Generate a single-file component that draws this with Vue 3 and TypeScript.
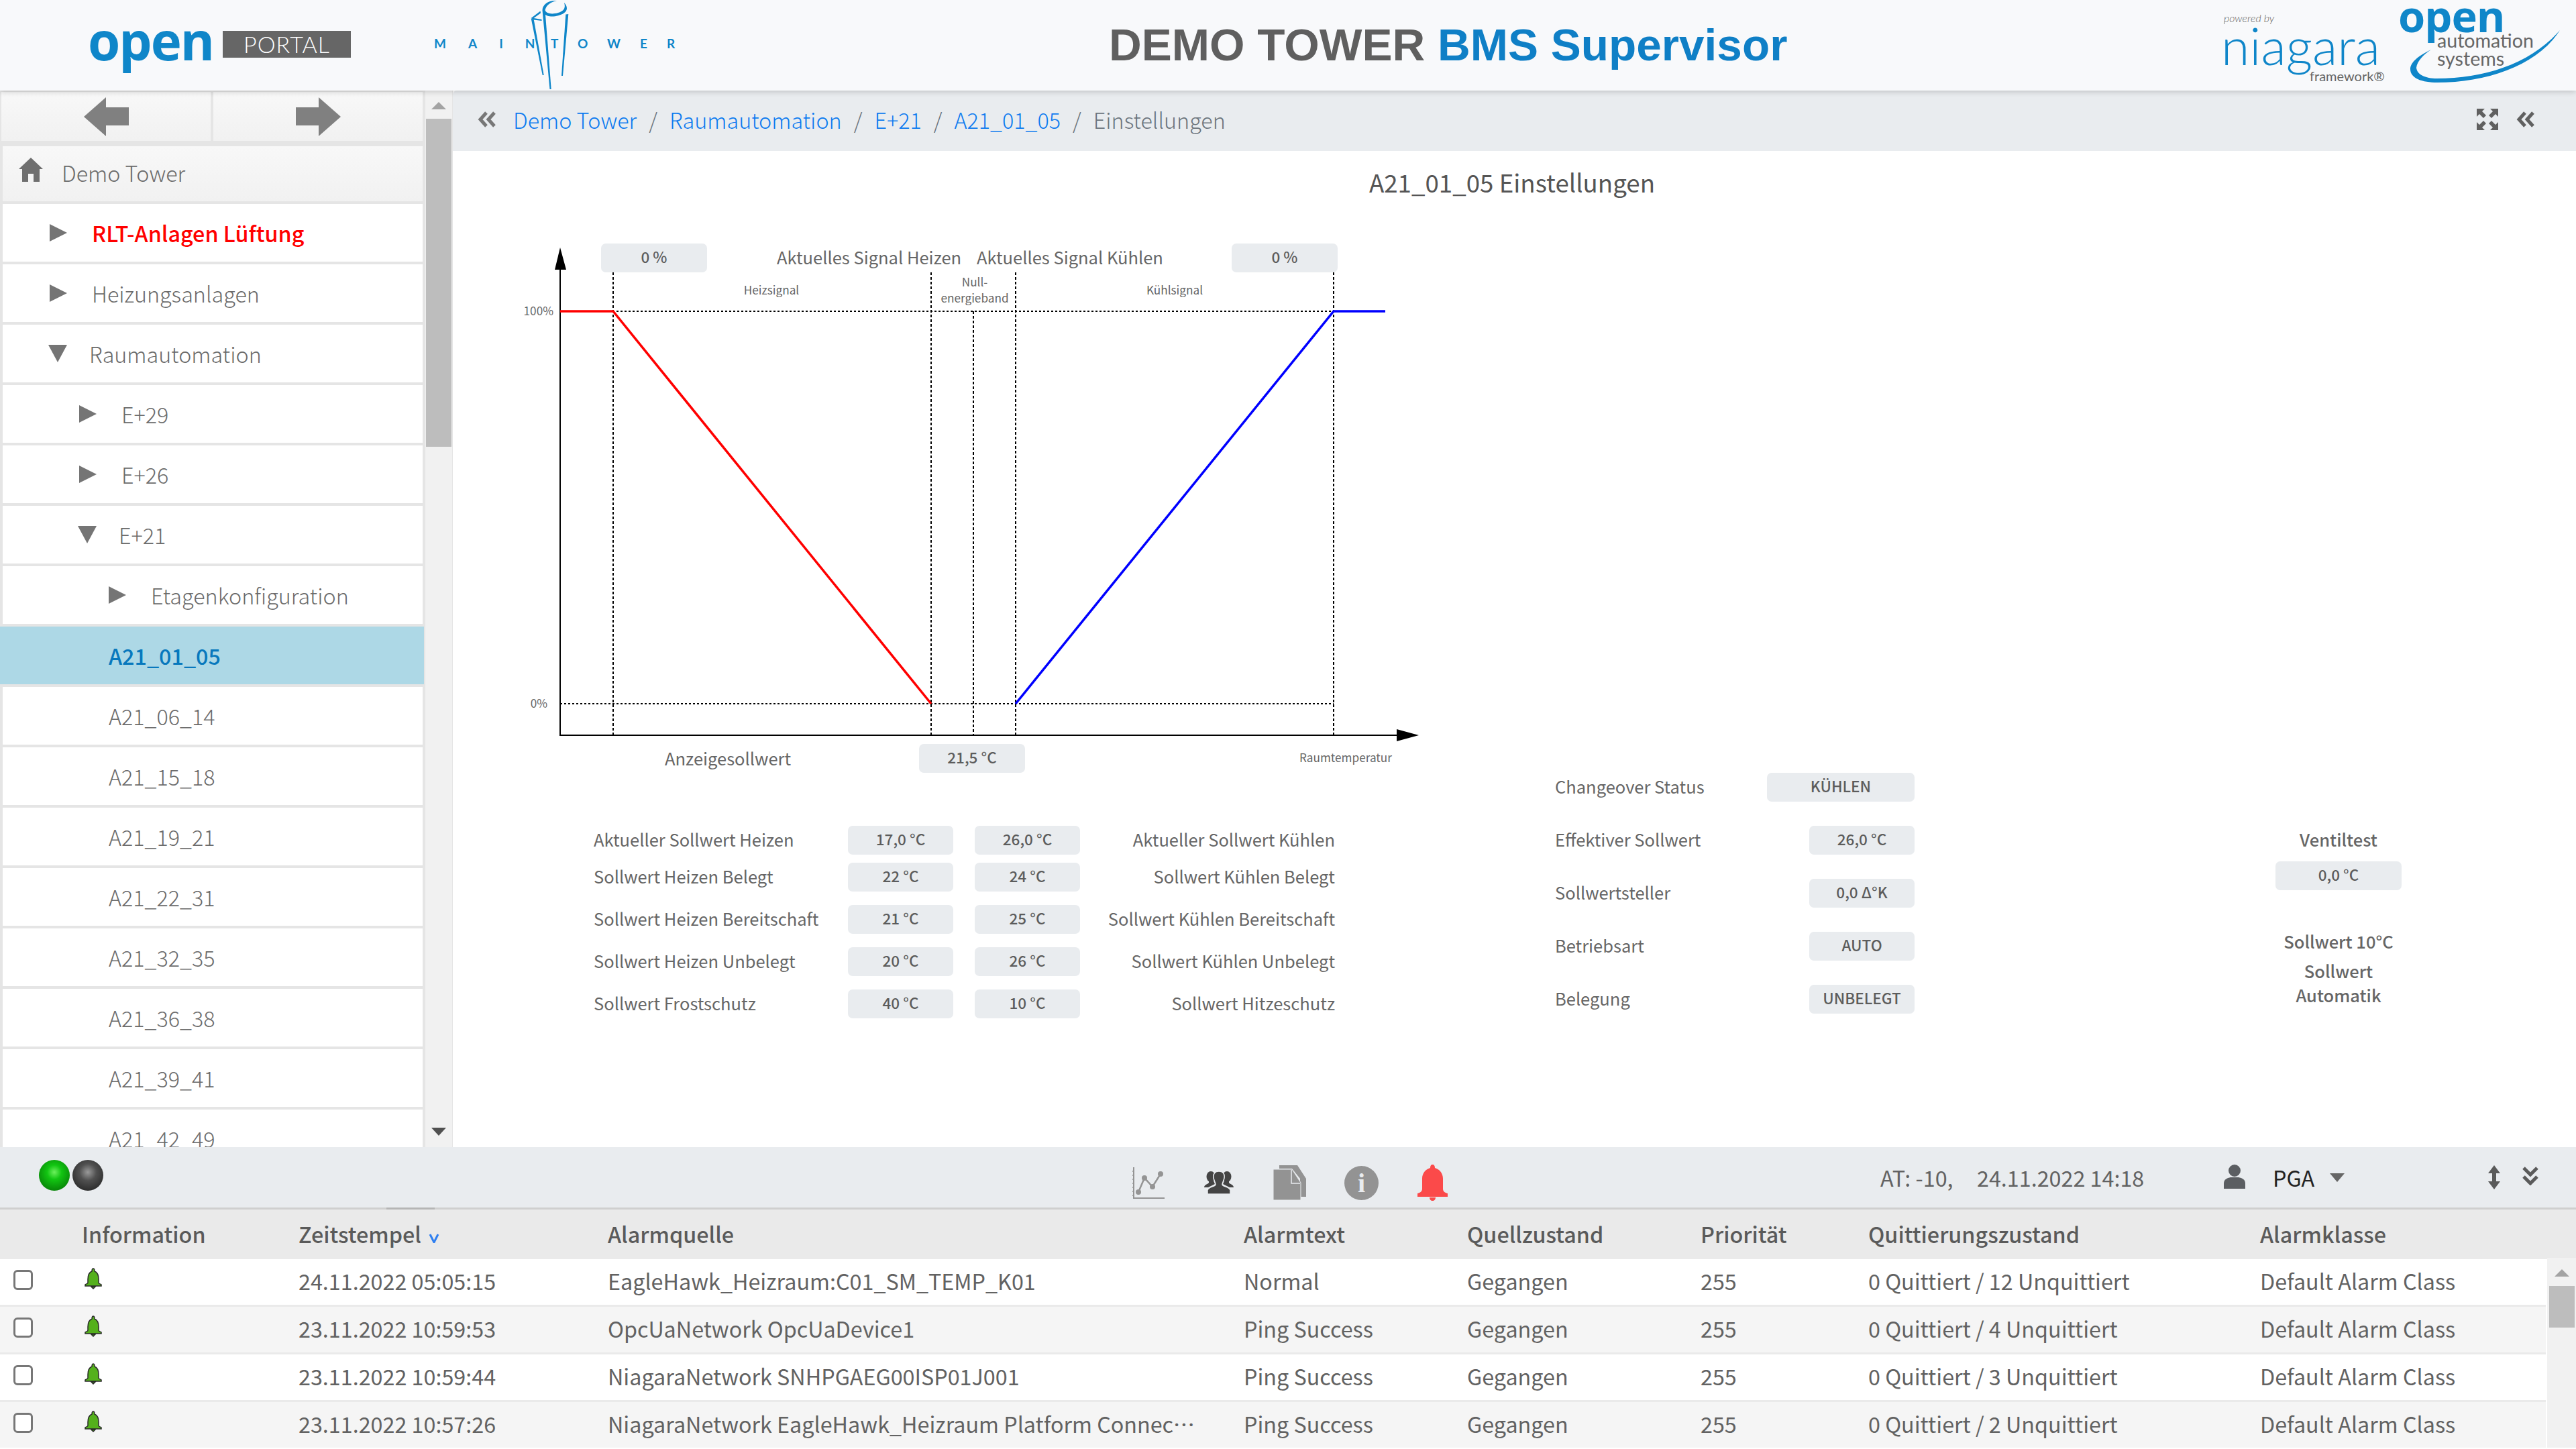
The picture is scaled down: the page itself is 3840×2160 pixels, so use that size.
<script setup lang="ts">
interface NavItem {
  label: string
  level: number
  arrow?: 'right' | 'down'
  alert?: boolean
  active?: boolean
}

interface AlarmRow {
  time: string
  source: string
  text: string
  ack: string
}

const navItems: NavItem[] = [
  { label: 'RLT-Anlagen Lüftung', level: 0, arrow: 'right', alert: true },
  { label: 'Heizungsanlagen', level: 0, arrow: 'right' },
  { label: 'Raumautomation', level: 0, arrow: 'down' },
  { label: 'E+29', level: 1, arrow: 'right' },
  { label: 'E+26', level: 1, arrow: 'right' },
  { label: 'E+21', level: 1, arrow: 'down' },
  { label: 'Etagenkonfiguration', level: 2, arrow: 'right' },
  { label: 'A21_01_05', level: 3, active: true },
  { label: 'A21_06_14', level: 3 },
  { label: 'A21_15_18', level: 3 },
  { label: 'A21_19_21', level: 3 },
  { label: 'A21_22_31', level: 3 },
  { label: 'A21_32_35', level: 3 },
  { label: 'A21_36_38', level: 3 },
  { label: 'A21_39_41', level: 3 },
  { label: 'A21_42_49', level: 3 },
]

const crumbs = ['Demo Tower', 'Raumautomation', 'E+21', 'A21_01_05']

const setpoints = [
  { left: 'Aktueller Sollwert Heizen', a: '17,0 °C', b: '26,0 °C', right: 'Aktueller Sollwert Kühlen' },
  { left: 'Sollwert Heizen Belegt', a: '22 °C', b: '24 °C', right: 'Sollwert Kühlen Belegt' },
  { left: 'Sollwert Heizen Bereitschaft', a: '21 °C', b: '25 °C', right: 'Sollwert Kühlen Bereitschaft' },
  { left: 'Sollwert Heizen Unbelegt', a: '20 °C', b: '26 °C', right: 'Sollwert Kühlen Unbelegt' },
  { left: 'Sollwert Frostschutz', a: '40 °C', b: '10 °C', right: 'Sollwert Hitzeschutz' },
]

const states = [
  { label: 'Effektiver Sollwert', value: '26,0 °C' },
  { label: 'Sollwertsteller', value: '0,0 Δ°K' },
  { label: 'Betriebsart', value: 'AUTO' },
  { label: 'Belegung', value: 'UNBELEGT' },
]

const columns = ['Information', 'Zeitstempel', 'Alarmquelle', 'Alarmtext', 'Quellzustand', 'Priorität', 'Quittierungszustand', 'Alarmklasse']

const alarms: AlarmRow[] = [
  { time: '24.11.2022 05:05:15', source: 'EagleHawk_Heizraum:C01_SM_TEMP_K01', text: 'Normal', ack: '0 Quittiert / 12 Unquittiert' },
  { time: '23.11.2022 10:59:53', source: 'OpcUaNetwork OpcUaDevice1', text: 'Ping Success', ack: '0 Quittiert / 4 Unquittiert' },
  { time: '23.11.2022 10:59:44', source: 'NiagaraNetwork SNHPGAEG00ISP01J001', text: 'Ping Success', ack: '0 Quittiert / 3 Unquittiert' },
  { time: '23.11.2022 10:57:26', source: 'NiagaraNetwork EagleHawk_Heizraum Platform Connection', text: 'Ping Success', ack: '0 Quittiert / 2 Unquittiert' },
]
</script>

<template>
  <div class="app">
    <header class="top">
      <div class="logo-open">
        <span class="open-word">open</span>
        <span class="portal">PORTAL</span>
      </div>
      <div class="logo-tower">
        <span class="tower-word first">MAIN</span>
        <svg class="tower-mark" viewBox="0 0 70 135" width="70" height="135">
          <g fill="#0f86c9">
            <path d="M18.5 15 L22.5 15 L31.7 133 L29.5 133 Z" />
            <path d="M18.5 15 C19 6 28 0 40 1 C32 3 25 6 22.5 15 Z" />
            <path d="M22.5 15 C24 20 32 22 42 19 C49 17 54 13 51 4 C56 9 57 16 50 20 C42 25 26 27 21 20 Z" />
            <path d="M53.3 21.5 L57.3 21 L49 113 L47 113 Z" />
            <path d="M1.7 27.5 L5.7 29 L20.7 112 L18.7 112 Z" />
            <path d="M1.7 27 L15.5 16.5 L16 19.5 L5.7 27 L17.5 29 L17.5 31 L5.7 29.5 Z" />
          </g>
        </svg>
        <span class="tower-word second">TOWER</span>
      </div>
      <h1 class="main-title">DEMO TOWER <span>BMS Supervisor</span></h1>
      <div class="logo-niagara">
        <span class="powered">powered by</span>
        <span class="niagara-word">niagara</span>
        <span class="framework">framework®</span>
      </div>
      <div class="logo-oas">
        <svg class="swoosh" viewBox="0 0 226 80" width="226" height="80">
          <path d="M223 0 C180 50 110 72 40 72 C22 72 10 66 9 56 C10 46 20 36 31 29 C12 38 0 48 0 58 C0 72 18 78 40 78 C115 78 190 52 223 0 Z" fill="#0f86c9" />
        </svg>
        <span class="oas-open">open</span>
        <span class="oas-line">automation</span>
        <span class="oas-line">systems</span>
      </div>
    </header>

    <div class="mid">
      <aside class="side">
        <div class="side-main">
          <div class="nav-buttons">
            <button class="nav-btn" type="button">
              <svg viewBox="0 0 67 58" width="67" height="58"><path d="M0 29 L33 0 V15 H67 V42 H33 V58 Z" fill="#808080" /></svg>
            </button>
            <button class="nav-btn" type="button">
              <svg viewBox="0 0 67 58" width="67" height="58"><path d="M67 29 L34 0 V15 H0 V42 H34 V58 Z" fill="#808080" /></svg>
            </button>
          </div>
          <div class="home-row">
            <svg class="home-icon" viewBox="0 0 36 36" width="36" height="36">
              <path d="M18 0 L36 17 L31 17 L31 36 L22 36 L22 24 L14 24 L14 36 L5 36 L5 17 L0 17 Z" fill="#6f6f6f" />
            </svg>
            <span>Demo Tower</span>
          </div>
          <div
            v-for="item in navItems"
            :key="item.label"
            class="nav-item"
            :class="['lvl-' + item.level, { alert: item.alert, active: item.active }]"
          >
            <span v-if="item.arrow" class="tri" :class="item.arrow"></span>
            <span class="nav-label">{{ item.label }}</span>
          </div>
        </div>
        <div class="scrollbar">
          <span class="sb-up"></span>
          <span class="sb-thumb"></span>
          <span class="sb-down"></span>
        </div>
      </aside>

      <main class="page">
        <nav class="crumb-bar">
          <svg class="chev" viewBox="0 0 30 24" width="30" height="24">
            <path d="M14 2 L5 12 L14 22 M26 2 L17 12 L26 22" fill="none" stroke="#777" stroke-width="5" />
          </svg>
          <template v-for="c in crumbs" :key="c">
            <a class="crumb">{{ c }}</a>
            <span class="sep">/</span>
          </template>
          <span class="crumb-last">Einstellungen</span>
          <svg class="expand" viewBox="0 0 32 32" width="32" height="32">
            <path d="M0 0 H12 L8 4 L14 10 L10 14 L4 8 L0 12 Z M32 0 V12 L28 8 L22 14 L18 10 L24 4 L20 0 Z M0 32 V20 L4 24 L10 18 L14 22 L8 28 L12 32 Z M32 32 H20 L24 28 L18 22 L22 18 L28 24 L32 20 Z" fill="#606060" />
          </svg>
          <svg class="chev-right" viewBox="0 0 30 24" width="30" height="24">
            <path d="M14 2 L5 12 L14 22 M26 2 L17 12 L26 22" fill="none" stroke="#606060" stroke-width="5" />
          </svg>
        </nav>

        <h2 class="page-title">A21_01_05 Einstellungen</h2>

        <div class="content">
          <section class="left-col">
            <div class="chart">
              <svg viewBox="0 0 1400 820" width="1400" height="820">
                <g stroke="#000" stroke-width="2" fill="none">
                  <g stroke-dasharray="4 3">
                    <path d="M154 66 V756" />
                    <path d="M628 66 V756" />
                    <path d="M691 124 V756" />
                    <path d="M754 66 V756" />
                    <path d="M1228 66 V756" />
                  </g>
                  <g stroke-dasharray="3 3">
                    <path d="M75 124 H1228" />
                    <path d="M75 709 H1228" />
                  </g>
                  <path d="M75 40 V756 H1330" />
                </g>
                <path d="M75 29 L67 62 H84 Z" fill="#000" />
                <path d="M1355 756 L1322 747 V765 Z" fill="#000" />
                <path d="M75 124 H154 L628 709" fill="none" stroke="#ff0000" stroke-width="3.5" />
                <path d="M754 709 L1228 124 H1305" fill="none" stroke="#0000ff" stroke-width="3.5" />
                <g class="small">
                  <text x="390" y="99" text-anchor="middle">Heizsignal</text>
                  <text x="693" y="87" text-anchor="middle">Null-</text>
                  <text x="693" y="111" text-anchor="middle">energieband</text>
                  <text x="991" y="99" text-anchor="middle">Kühlsignal</text>
                  <text x="65" y="130" text-anchor="end">100%</text>
                  <text x="56" y="715" text-anchor="end">0%</text>
                  <text x="1177" y="796">Raumtemperatur</text>
                </g>
                <g class="medium">
                  <text x="398" y="54">Aktuelles Signal Heizen</text>
                  <text x="696" y="54">Aktuelles Signal Kühlen</text>
                  <text x="231" y="801">Anzeigesollwert</text>
                </g>
              </svg>
              <div class="pill chart-pill p-a">0 %</div>
              <div class="pill chart-pill p-b">0 %</div>
              <div class="pill chart-pill p-c">21,5 °C</div>
            </div>

            <div class="setpoints">
              <div v-for="row in setpoints" :key="row.left" class="sp-row">
                <span class="sp-label">{{ row.left }}</span>
                <span class="pill sp-pill">{{ row.a }}</span>
                <span class="pill sp-pill">{{ row.b }}</span>
                <span class="sp-label right">{{ row.right }}</span>
              </div>
            </div>
          </section>

          <section class="state-col">
            <div class="state-row">
              <span class="sp-label">Changeover Status</span>
              <span class="pill wide">KÜHLEN</span>
            </div>
            <div v-for="s in states" :key="s.label" class="state-row">
              <span class="sp-label">{{ s.label }}</span>
              <span class="pill narrow">{{ s.value }}</span>
            </div>
          </section>

          <section class="valve-col">
            <div class="valve-head">Ventiltest</div>
            <div class="pill valve-pill">0,0 °C</div>
            <div class="valve-head strong">Sollwert 10°C</div>
            <div class="valve-head auto">Sollwert<br />Automatik</div>
          </section>
        </div>
      </main>
    </div>

    <div class="status-bar">
      <div class="leds">
        <span class="led green"></span>
        <span class="led dark"></span>
      </div>
      <div class="tools">
        <svg class="t-chart" viewBox="0 0 51 51" width="51" height="51">
          <path d="M5 2 V48 H51" fill="none" stroke="#949494" stroke-width="2" />
          <path d="M3 8 H6 M3 14 H6 M3 20 H6 M3 26 H6 M3 32 H6 M3 38 H6 M3 44 H6 M10 49 V47 M16 49 V47 M22 49 V47 M28 49 V47 M34 49 V47 M40 49 V47 M46 49 V47" stroke="#949494" stroke-width="1.5" />
          <path d="M12 39 L21 18 L33 31 L45 12" fill="none" stroke="#949494" stroke-width="2.5" />
          <g fill="#949494"><circle cx="12" cy="39" r="4" /><circle cx="21" cy="18" r="4" /><circle cx="33" cy="31" r="4" /><circle cx="45" cy="12" r="4" /></g>
        </svg>
        <svg class="t-group" viewBox="0 0 44 34" width="44" height="34">
          <g fill="#444">
            <ellipse cx="10" cy="8" rx="6.5" ry="8" />
            <path d="M7 14 H14 L16 19 L6 24 H0 C0 20 6 19 7 17 Z" />
            <ellipse cx="34" cy="8" rx="6.5" ry="8" />
            <path d="M37 14 H30 L28 19 L38 24 H44 C44 20 38 19 37 17 Z" />
            <path d="M22 0 C28 0 31 4 30 10 C29 15 27 17 27 20 C28 23 37 23 39 28 V34 H5 V28 C7 23 16 23 17 20 C17 17 15 15 14 10 C13 4 16 0 22 0 Z" stroke="#e9ecef" stroke-width="1.5" />
          </g>
        </svg>
        <svg class="t-docs" viewBox="0 0 49 52" width="49" height="52">
          <path d="M9 0 H36 L49 20 V47 H40 V20 L28 5 H9 Z" fill="#939393" />
          <path d="M0 6 H28 L41 26 V52 H0 Z" fill="#939393" stroke="#e9ecef" stroke-width="1" />
          <path d="M27 7 V27 H40" fill="none" stroke="#e9ecef" stroke-width="1.5" />
        </svg>
        <span class="t-info">i</span>
        <svg class="t-bell" viewBox="0 0 45 54" width="45" height="54">
          <path d="M22.5 0 C25 0 26 2 26 5 C33 7 38 13 38 21 V36 C38 40 41 42 45 43 V48 H0 V43 C4 42 7 40 7 36 V21 C7 13 12 7 19 5 C19 2 20 0 22.5 0 Z M18 49 H27 C27 52 25 54 22.5 54 C20 54 18 52 18 49 Z" fill="#fb4a4a" />
        </svg>
      </div>
      <div class="at">AT: -10,</div>
      <div class="stamp">24.11.2022 14:18</div>
      <svg class="user" viewBox="0 0 32 36" width="32" height="36">
        <ellipse cx="16" cy="9" rx="9" ry="9" fill="#5b5e62" />
        <path d="M0 36 V28 C0 22 5 20 10 19 H22 C27 20 32 22 32 28 V36 Z" fill="#5b5e62" />
      </svg>
      <span class="who">PGA</span>
      <span class="caret"></span>
      <svg class="updown" viewBox="0 0 18 36" width="18" height="36">
        <path d="M9 0 L18 12 H12 V24 H18 L9 36 L0 24 H6 V12 H0 Z" fill="#5a5a5a" />
      </svg>
      <svg class="dbl-down" viewBox="0 0 24 28" width="24" height="28">
        <path d="M2 2 L12 12 L22 2 M2 15 L12 25 L22 15" fill="none" stroke="#5a5a5a" stroke-width="5" />
      </svg>
      <span class="grip"></span>
    </div>

    <section class="alarms">
      <div class="alarm-row head">
        <span></span>
        <span v-for="(col, i) in columns" :key="col" class="th">
          {{ col }}
          <svg v-if="i === 1" class="sort" viewBox="0 0 16 14" width="16" height="14">
            <path d="M2 1 L8 13 L14 1" fill="none" stroke="#2f7ff0" stroke-width="3" />
          </svg>
        </span>
      </div>
      <div class="alarm-body">
        <div class="rows">
          <div v-for="(a, i) in alarms" :key="a.time" class="alarm-row item" :class="{ odd: i % 2 === 1 }">
            <span class="check-cell"><input class="check" type="checkbox" /></span>
            <span class="bell-cell">
              <svg viewBox="0 0 28 32" width="28" height="32">
                <path d="M14 1 C16 1 16 3 16 5 C21 7 22 12 22 17 V22 C22 24 25 24 26 25 V27 H2 V25 C3 24 6 24 6 22 V17 C6 12 7 7 12 5 C12 3 12 1 14 1 Z M11 28 H17 L14 31 Z" fill="#54b01c" stroke="#2a2a2a" stroke-width="1.5" />
              </svg>
            </span>
            <span>{{ a.time }}</span>
            <span class="truncate">{{ a.source }}</span>
            <span>{{ a.text }}</span>
            <span>Gegangen</span>
            <span>255</span>
            <span>{{ a.ack }}</span>
            <span>Default Alarm Class</span>
          </div>
        </div>
        <div class="table-scroll">
          <span class="sb-up"></span>
          <span class="ts-thumb"></span>
        </div>
      </div>
    </section>
  </div>
</template>

<style>
html,
body {
  margin: 0;
  background: #fff;
}
</style>

<style scoped>
.app {
  width: 3840px;
  height: 2160px;
  overflow: hidden;
  display: flex;
  flex-direction: column;
  font-family: 'Noto Sans CJK SC', 'Noto Sans', sans-serif;
  color: #626262;
  font-size: 32.3px;
}

/* header */
.top {
  height: 135px;
  flex: none;
  position: relative;
  z-index: 2;
  display: flex;
  align-items: flex-start;
  background: #f8f9fb;
  box-shadow: 0 2px 8px rgba(0, 0, 0, 0.18);
}
.logo-open {
  display: flex;
  align-items: flex-start;
  margin: 46px 0 0 131px;
  width: 516px;
}
.open-word {
  font: 700 78px/28px 'Open Sans', sans-serif;
  color: #0f86c9;
  letter-spacing: -2px;
  width: 190px;
  flex: none;
}
.portal {
  margin-left: 11px;
  width: 191px;
  height: 40px;
  background: #666;
  color: #fff;
  font: 300 34px/40px Lato, sans-serif;
  letter-spacing: 1px;
  text-align: center;
}
.logo-tower {
  width: 363px;
  display: flex;
  align-items: flex-start;
}
.tower-word {
  font: 700 19px/20px Lato, sans-serif;
  color: #0f86c9;
  margin-top: 55px;
  white-space: nowrap;
}
.tower-word.first {
  flex: none;
  width: 143px;
  letter-spacing: 33px;
}
.tower-word.second {
  flex: none;
  margin-left: -39px;
  letter-spacing: 29px;
}
.tower-mark {
  flex: none;
}
.main-title {
  margin: 23px 0 0 643px;
  font: 700 67.5px/88px 'Liberation Sans', sans-serif;
  color: #5f5f5f;
  white-space: nowrap;
  width: 1662px;
  flex: none;
}
.main-title span {
  color: #0f7fc6;
}
.logo-niagara {
  width: 260px;
  flex: none;
  display: flex;
  flex-direction: column;
}
.powered {
  margin-top: 17px;
  font: italic 300 16px/20px Lato, sans-serif;
  color: #666;
}
.niagara-word {
  font: 300 77px/60px Lato, sans-serif;
  color: #0f86c9;
  margin-left: -4px;
}
.framework {
  margin: 6px 0 0 128px;
  font: 400 20px/20px Lato, sans-serif;
  color: #666;
  white-space: nowrap;
}
.logo-oas {
  position: relative;
  flex: none;
  display: flex;
  flex-direction: column;
  padding-left: 58px;
}
.swoosh {
  position: absolute;
  left: 18px;
  top: 45px;
}
.oas-open {
  margin-left: -58px;
  font: 700 65px/46px 'Open Sans', sans-serif;
  color: #0f86c9;
  height: 47px;
  letter-spacing: -1px;
}
.oas-line {
  font: 400 28.6px/27px Lato, sans-serif;
  color: #666;
  position: relative;
}

/* main band */
.mid {
  height: 1575px;
  flex: none;
  display: flex;
  overflow: hidden;
}
.side {
  width: 675px;
  flex: none;
  display: flex;
  background: #e5e5e5;
}
.side-main {
  width: 632px;
  flex: none;
}
.nav-buttons {
  display: flex;
  gap: 4px;
  padding: 2px 2px 6px;
  box-sizing: border-box;
  height: 81px;
}
.nav-btn {
  flex: 1;
  border: 0;
  padding: 0;
  display: flex;
  align-items: center;
  justify-content: center;
  background: linear-gradient(#f8f8f8, #f1f1f1);
}
.home-row {
  height: 82px;
  box-sizing: border-box;
  padding-bottom: 4px;
  margin: 2px 2px 4px 4px;
  display: flex;
  align-items: center;
  gap: 28px;
  padding-left: 24px;
  font-weight: 300;
  color: #6b6b6b;
  background: linear-gradient(#f8f8f8, #f1f1f1);
}
.home-icon {
  margin-top: -8px;
}
.nav-item {
  height: 86px;
  margin-bottom: 4px;
  margin-left: 4px;
  margin-right: 2px;
  background: #fff;
  display: flex;
  align-items: center;
  font-weight: 300;
  color: #6b6b6b;
}
.nav-item.lvl-0 { padding-left: 70px; }
.nav-item.lvl-1 { padding-left: 114px; }
.nav-item.lvl-2 { padding-left: 158px; }
.nav-item.lvl-3 { padding-left: 158px; }
.nav-item.alert {
  color: #ff0000;
  font-weight: 500;
}
.nav-item.active {
  background: #add8e6;
  color: #0878bd;
  font-weight: 500;
  margin-left: 0;
  margin-right: 0;
  padding-left: 162px;
}
.tri {
  display: inline-block;
  width: 0;
  height: 0;
  flex: none;
  margin-right: 37px;
}
.tri.right {
  border-left: 26px solid #757575;
  border-top: 13px solid transparent;
  border-bottom: 13px solid transparent;
}
.tri.down {
  border-top: 26px solid #757575;
  border-left: 14px solid transparent;
  border-right: 14px solid transparent;
  margin-right: 33px;
  margin-left: -2px;
}
.scrollbar {
  width: 40px;
  margin-left: 2px;
  flex: none;
  background: #f1f1f1;
  position: relative;
}
.sb-up,
.sb-down {
  position: absolute;
  left: 50%;
  width: 0;
  height: 0;
  margin-left: -11px;
  border-left: 11px solid transparent;
  border-right: 11px solid transparent;
}
.sb-up {
  top: 17px;
  border-bottom: 11px solid #a3a3a3;
}
.sb-down {
  bottom: 17px;
  border-top: 12px solid #505050;
}
.sb-thumb {
  position: absolute;
  left: 1px;
  right: 1px;
  top: 42px;
  height: 489px;
  background: #bdbdbd;
}

/* page */
.page {
  flex: 1;
  min-width: 0;
  background: #fff;
}
.crumb-bar {
  height: 90px;
  box-sizing: border-box;
  padding-bottom: 4px;
  display: flex;
  align-items: center;
  background: #e9ecef;
  font-weight: 300;
  border-radius: 6px 0 0 0;
}
.chev {
  margin: 0 24px 0 36px;
  flex: none;
}
.crumb {
  color: #0d7bf0;
}
.sep {
  color: #6c757d;
  margin: 0 18px;
}
.crumb-last {
  color: #6c757d;
}
.expand {
  margin-left: auto;
  margin-right: 26px;
}
.chev-right {
  margin-right: 60px;
}
.page-title {
  margin: 0;
  height: 115px;
  box-sizing: border-box;
  padding-top: 16px;
  font-size: 36.7px;
  line-height: 60px;
  font-weight: 400;
  color: #555;
  text-align: center;
  padding-right: 7px;
}
.content {
  display: flex;
  padding-left: 85px;
}
.left-col {
  width: 1558px;
  flex: none;
}
.chart {
  position: relative;
  width: 1400px;
  height: 820px;
}
.chart svg {
  display: block;
}
.small text {
  font-size: 17.2px;
  fill: #666;
}
.medium text {
  font-size: 25.5px;
  fill: #666;
}
.pill {
  background: #e9ecef;
  border-radius: 7px;
  height: 43px;
  line-height: 38px;
  font-size: 22.5px;
  font-weight: 500;
  text-align: center;
  color: #5c5c5c;
  box-sizing: border-box;
}
.chart-pill {
  position: absolute;
  width: 158px;
}
.p-a { left: 136px; top: 23px; }
.p-b { left: 1076px; top: 23px; }
.p-c { left: 610px; top: 769px; }
.setpoints {
  margin-top: 71px;
  padding-left: 125px;
  width: 1105px;
  display: flex;
  flex-direction: column;
  gap: 20px;
}
.sp-row {
  display: grid;
  grid-template-columns: 347px 157px 157px 1fr;
  column-gap: 32px;
  height: 43px;
  align-items: center;
}
.sp-row:first-child {
  margin-bottom: -8px;
}
.sp-label {
  font-size: 25.5px;
  line-height: 39px;
  padding-bottom: 4px;
  color: #666;
  white-space: nowrap;
}
.sp-label.right {
  text-align: right;
  margin-left: -32px;
}
.state-col {
  width: 536px;
  flex: none;
  padding-top: 812px;
  display: flex;
  flex-direction: column;
  gap: 36px;
}
.state-row {
  display: flex;
  justify-content: space-between;
  align-items: center;
  height: 43px;
}
.pill.wide {
  width: 220px;
}
.pill.narrow {
  width: 157px;
}
.valve-col {
  margin-left: 538px;
  width: 188px;
  padding-top: 893px;
  flex: none;
  text-align: center;
}
.valve-head {
  font-size: 25.5px;
  line-height: 36px;
  color: #666;
  font-weight: 500;
  white-space: nowrap;
}
.valve-pill {
  margin-top: 15px;
}
.valve-head.strong {
  margin-top: 58px;
}
.valve-head.auto {
  margin-top: 8px;
}

/* status bar */
.status-bar {
  height: 93px;
  flex: none;
  box-sizing: border-box;
  border-bottom: 3px solid #cfcfcf;
  background: #e9ecef;
  display: flex;
  align-items: center;
  position: relative;
}
.leds {
  display: flex;
  gap: 4px;
  margin-left: 58px;
  width: 1627px;
  margin-top: -6px;
}
.led {
  width: 46px;
  height: 46px;
  border-radius: 50%;
}
.led.green {
  background: radial-gradient(circle at 50% 40%, #6cf05c 0, #12c512 30%, #067a06 85%);
}
.led.dark {
  background: radial-gradient(circle at 50% 40%, #9a9a9a 0, #505050 35%, #222 90%);
}
.tools {
  width: 1118px;
  display: flex;
  align-items: center;
  margin-top: 10px;
}
.t-chart { margin-top: 6px; }
.t-group { margin: 6px 0 0 59px; }
.t-docs { margin: 6px 0 0 59px; }
.t-info {
  width: 51px;
  height: 51px;
  margin: 6px 0 0 57px;
  border-radius: 50%;
  background: #939393;
  color: #e9ecef;
  font: 700 40px/51px 'Liberation Serif', serif;
  text-align: center;
}
.t-bell { margin: 6px 0 0 58px; }
.at {
  width: 144px;
  white-space: nowrap;
}
.stamp {
  width: 368px;
  white-space: nowrap;
}
.user {
  margin: -2px 0 0 0;
  flex: none;
}
.who {
  margin-left: 41px;
  color: #222;
}
.caret {
  margin-left: 23px;
  width: 0;
  height: 0;
  border-top: 13px solid #666;
  border-left: 11px solid transparent;
  border-right: 11px solid transparent;
}
.updown {
  margin: 0 0 0 214px;
  flex: none;
}
.dbl-down {
  margin: -4px 0 0 33px;
  flex: none;
}
.grip {
  position: absolute;
  left: 576px;
  bottom: -3px;
  width: 72px;
  height: 3px;
  background: #b5b5b5;
}

/* table */
.alarms {
  flex: 1;
  min-height: 0;
  overflow: hidden;
}
.alarm-row {
  display: grid;
  grid-template-columns: 122px 323px 461px 948px 333px 348px 250px 584px 1fr;
  align-items: center;
  white-space: nowrap;
}
.alarm-row.head {
  height: 74px;
  box-sizing: border-box;
  padding-bottom: 2px;
  background: #eaeaea;
  font-weight: 500;
  color: #5a5a5a;
}
.sort {
  margin-left: 4px;
}
.alarm-body {
  display: flex;
}
.rows {
  width: 3795px;
  flex: none;
  background: #eaeaea;
  display: flex;
  flex-direction: column;
  gap: 3px;
}
.alarm-row.item {
  height: 68px;
  box-sizing: border-box;
  padding-bottom: 4px;
  background: #fff;
}
.alarm-row.item.odd {
  background: #f5f5f5;
}
.check-cell {
  padding-left: 20px;
  display: flex;
  margin-top: -3px;
}
.check {
  appearance: none;
  margin: 0;
  width: 29px;
  height: 30px;
  border: 3px solid #777;
  border-radius: 6px;
  background: #fff;
  box-sizing: border-box;
}
.bell-cell {
  display: flex;
  margin: -6px 0 0 3px;
}
.truncate {
  font-family: 'Noto Sans CJK KR', 'Noto Sans', sans-serif;
  overflow: hidden;
  text-overflow: ellipsis;
  padding-right: 64px;
}
.table-scroll {
  flex: 1;
  position: relative;
  margin-top: -2px;
  margin-left: 2px;
  background: #f1f1f1;
}
.ts-thumb {
  position: absolute;
  left: 3px;
  right: 2px;
  top: 42px;
  height: 62px;
  background: #bdbdbd;
}
</style>
